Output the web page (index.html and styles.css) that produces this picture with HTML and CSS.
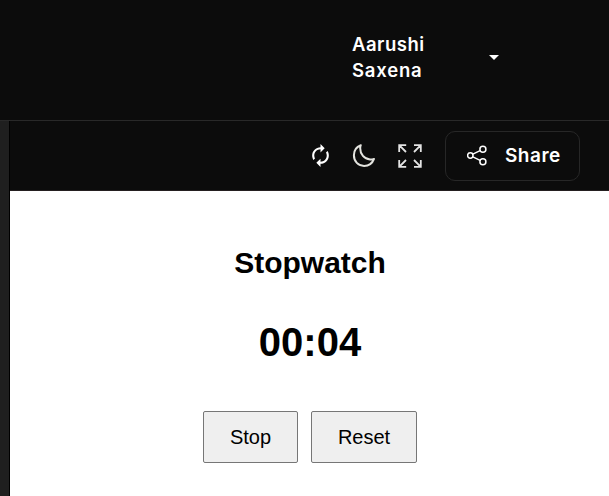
FILE: index.html
```html
<!DOCTYPE html>
<html lang="en">
<head>
<meta charset="utf-8">
<title>Stopwatch</title>
<link rel="stylesheet" href="styles.css">
</head>
<body>
<header class="header">
  <div class="user"><span class="first">Aarushi</span><span class="last">Saxena</span></div>
  <svg class="caret" width="10" height="5" viewBox="0 0 10 5"><path d="M0 0h10L5 5z" fill="#fff"/></svg>
</header>
<div class="workspace">
  <div class="gutter"></div>
  <main class="panel">
    <div class="toolbar">
      <svg class="refresh" width="25" height="25" viewBox="0 0 24 24"><path fill="#fff" d="M12 6v3l4-4-4-4v3c-4.42 0-8 3.58-8 8 0 1.57.46 3.03 1.24 4.26L6.7 14.8c-.45-.83-.7-1.79-.7-2.8 0-3.31 2.69-6 6-6zm6.76 1.74L17.3 9.2c.44.84.7 1.79.7 2.8 0 3.31-2.69 6-6 6v-3l-4 4 4 4v-3c4.42 0 8-3.58 8-8 0-1.57-.46-3.03-1.24-4.26z"/></svg>
      <svg class="moon" width="24" height="24" viewBox="0 0 24 24"><path fill="none" stroke="#e4e4df" stroke-width="2" stroke-linejoin="round" d="M8.800 1.200C4.600 2.700 1.900 6.500 1.900 11.300c0 6.100 4.400 10.600 10.200 10.600 4.600 0 8.300-2.700 9.900-7-1.400.5-2.600.7-4 .6C12.200 15 8.200 10.300 8.200 4.200c0-1.100.2-2 .6-3z"/></svg>
      <svg class="expand" width="24" height="24" viewBox="0 0 24 24"><path fill="none" stroke="#e4e4e4" stroke-width="1.8" d="M1.200 8V1.200h7M1.200 1.200l6.800 6.800M16 1.200h6.800v6.800M22.800 1.200l-6.800 6.800M1.200 16v6.800h7M1.200 22.800l6.800-6.800M16 22.800h6.800v-6.800M22.800 22.800l-6.800-6.800"/></svg>
      <div class="share">
        <svg width="21" height="21" viewBox="0 0 21 21"><g fill="none" stroke="#fff" stroke-width="1.500"><circle cx="3.300" cy="10.500" r="2.700"/><circle cx="15.900" cy="4.300" r="3"/><circle cx="15.900" cy="16.700" r="3"/><path d="M5.900 9.200l7.200-3.500M5.900 11.800l7.200 3.500"/></g></svg>
        <span>Share</span>
      </div>
    </div>
    <section class="stopwatch">
      <h2>Stopwatch</h2>
      <div class="time">00:04</div>
      <div class="actions"><button class="stop">Stop</button><button class="reset">Reset</button></div>
    </section>
  </main>
</div>
</body>
</html>
```
FILE: styles.css
```css
* { box-sizing: border-box; }
body {
  margin: 0;
  height: 496px;
  overflow: hidden;
  background: #0c0c0c;
  display: flex;
  flex-direction: column;
}
svg { display: block; flex: none; }
.header {
  height: 121px;
  flex: none;
  display: flex;
  align-items: flex-start;
  padding: 31px 0 0 352px;
  border-bottom: 1px solid #292929;
  color: #fff;
}
.user {
  width: 137px;
  display: flex;
  flex-direction: column;
  align-items: flex-start;
  font: 600 18.5px/26px Inter, sans-serif;
}
.first { letter-spacing: 0.5px; }
.last { letter-spacing: 0.8px; }
.caret { margin-top: 24px; }
.workspace { flex: 1; display: flex; min-height: 0; }
.gutter { width: 10px; background: #1f1f1f; border-right: 1px solid #000; }
.panel { flex: 1; display: flex; flex-direction: column; background: #fff; }
.toolbar {
  height: 70px;
  display: flex;
  align-items: center;
  justify-content: flex-end;
  padding-right: 29px;
  background: #0c0c0c;
  border-bottom: 1px solid #241f20;
}
.refresh { margin-right: 19px; }
.moon { margin-right: 22px; }
.expand { margin-right: 23px; }
.share {
  width: 135px;
  height: 50px;
  display: flex;
  align-items: center;
  gap: 17px;
  padding-left: 21px;
  border: 1px solid #272727;
  border-radius: 10px;
  color: #fff;
  font: 600 19px/26px Inter, sans-serif;
  letter-spacing: 0.5px;
}
.share span { padding-top: 1px; }
.stopwatch {
  flex: 1;
  display: flex;
  flex-direction: column;
  align-items: center;
  padding-top: 55px;
  font-family: "Liberation Sans", Arial, sans-serif;
  color: #000;
}
h2 { margin: 0; padding-left: 1px; font-size: 30px; line-height: 34px; }
.time { margin-top: 39px; padding-left: 1px; font-size: 40px; font-weight: 700; line-height: 46px; }
.actions { display: flex; gap: 13px; margin-top: 46px; }
button {
  height: 52px;
  padding: 0 0 0 1px;
  font: 20px "Liberation Sans", Arial, sans-serif;
  color: #000;
  background: #efefef;
  border: 1px solid #767676;
  border-radius: 2px;
}
.stop { width: 95px; }
.reset { width: 106px; }
```
